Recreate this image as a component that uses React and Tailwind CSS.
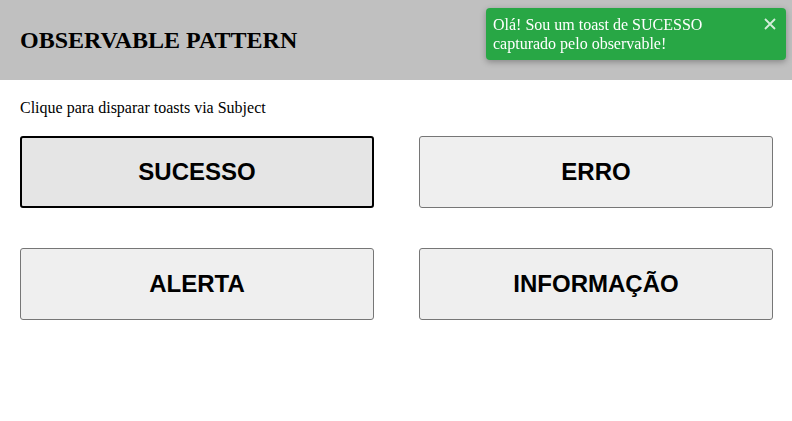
import React, { useState } from 'react';

const buttons = ['SUCESSO', 'ERRO', 'ALERTA', 'INFORMAÇÃO'];

const App = () => {
    const [toast, setToast] = useState({ type: 'SUCESSO' });

    return (
        <div className="min-h-screen bg-white font-['Liberation_Serif',serif] text-black">
            <header className="h-[80px] bg-[#c0c0c0] px-5 flex items-center">
                <h1 className="text-[24px] font-bold leading-none">OBSERVABLE PATTERN</h1>
            </header>
            <main className="pl-5 pr-[19px] pt-[19px]">
                <p className="text-[16px] leading-[18px]">Clique para disparar toasts via Subject</p>
                <div className="grid grid-cols-2 gap-x-[45px] gap-y-[40px] mt-[19px]">
                    {buttons.map((b, i) => (
                        <button
                            key={b}
                            onClick={() => setToast({ type: b })}
                            className={
                                i === 0
                                    ? "h-[72px] rounded-[3px] border-2 border-black bg-[#e5e5e5] font-['Liberation_Sans',Arial,sans-serif] text-[24px] font-bold"
                                    : "h-[72px] rounded-[3px] border border-[#767676] bg-[#efefef] font-['Liberation_Sans',Arial,sans-serif] text-[24px] font-bold"
                            }
                        >
                            {b}
                        </button>
                    ))}
                </div>
            </main>
            {toast && (
                <div className="fixed top-[8px] right-[6px] w-[300px] h-[52px] bg-[#28a745] rounded-[4px] shadow-[0_2px_6px_rgba(0,0,0,0.3)] pl-[7px] pr-[10px] py-[7px] flex items-start justify-between text-white">
                    <p className="text-[16px] leading-[19px]">Olá! Sou um toast de {toast.type} capturado pelo observable!</p>
                    <button onClick={() => setToast(null)} className="mt-[3px] text-white/80">
                        <svg width="12" height="12" viewBox="0 0 12 12" stroke="currentColor" strokeWidth="1.8">
                            <path d="M1 1L11 11M11 1L1 11" />
                        </svg>
                    </button>
                </div>
            )}
        </div>
    );
};

export default App;
